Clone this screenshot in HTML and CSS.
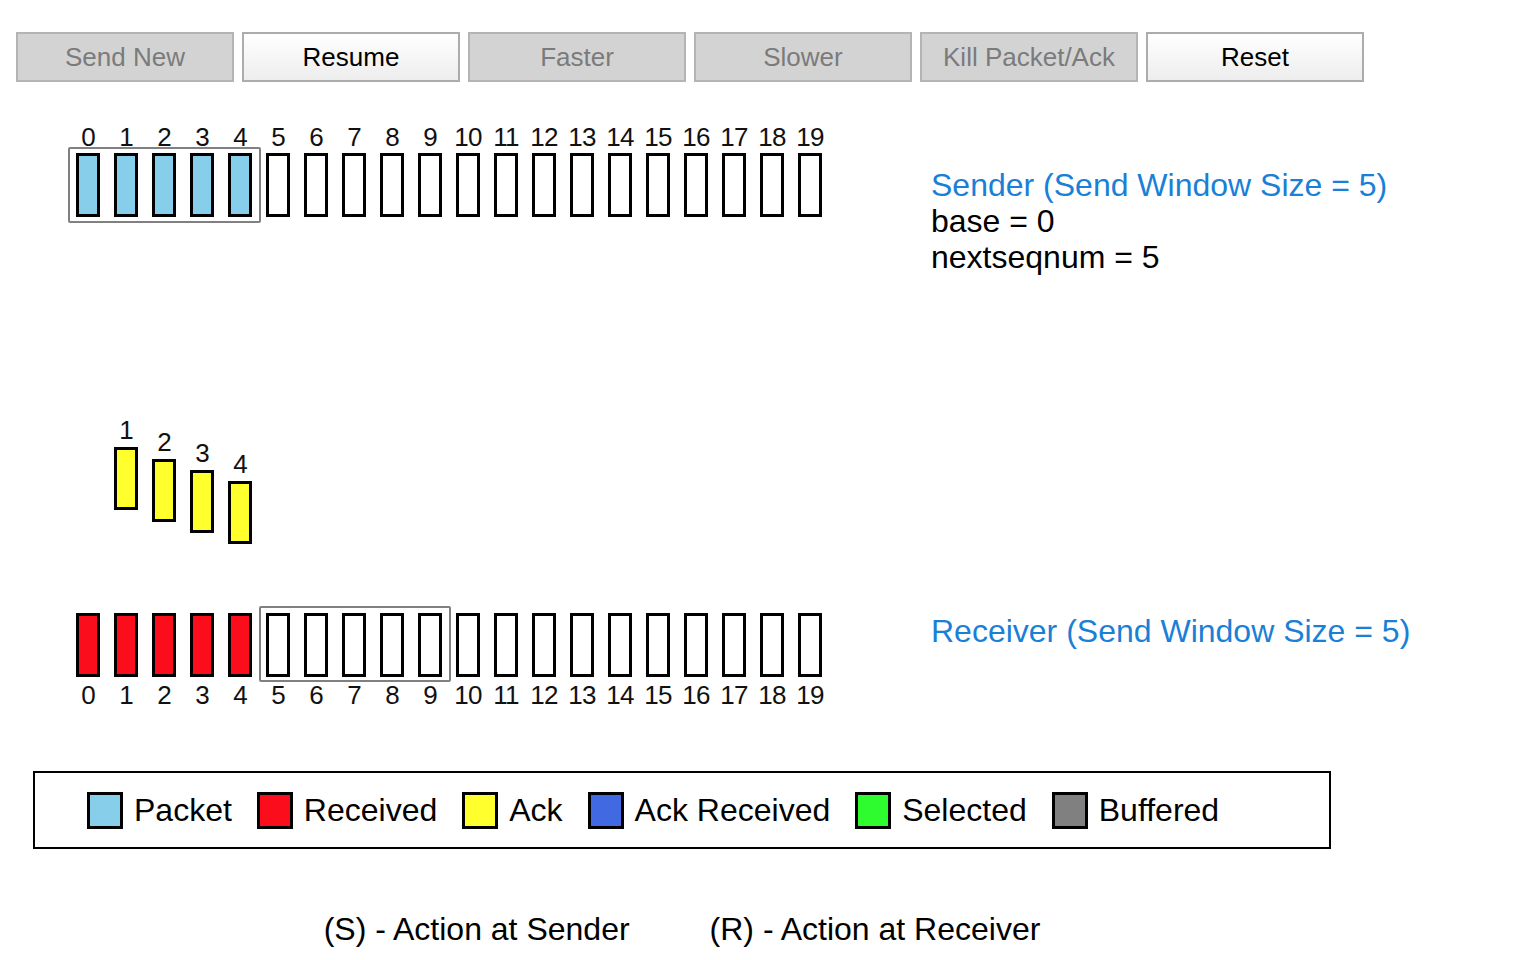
FILE: index.html
```html
<!DOCTYPE html>
<html>
<head>
<meta charset="utf-8">
<title>Selective Repeat</title>
<link rel="stylesheet" href="styles.css">
</head>
<body>
<div class="toolbar">
  <button class="btn" disabled>Send New</button>
  <button class="btn active">Resume</button>
  <button class="btn" disabled>Faster</button>
  <button class="btn" disabled>Slower</button>
  <button class="btn" disabled>Kill Packet/Ack</button>
  <button class="btn active">Reset</button>
</div>

<div class="row sender-row">
  <div class="diagram">
    <div class="strip">
      <div class="window sender-window"></div>
      <div class="slot"><span class="num">0</span><span class="cell packet"></span></div>
      <div class="slot"><span class="num">1</span><span class="cell packet"></span></div>
      <div class="slot"><span class="num">2</span><span class="cell packet"></span></div>
      <div class="slot"><span class="num">3</span><span class="cell packet"></span></div>
      <div class="slot"><span class="num">4</span><span class="cell packet"></span></div>
      <div class="slot"><span class="num">5</span><span class="cell"></span></div>
      <div class="slot"><span class="num">6</span><span class="cell"></span></div>
      <div class="slot"><span class="num">7</span><span class="cell"></span></div>
      <div class="slot"><span class="num">8</span><span class="cell"></span></div>
      <div class="slot"><span class="num">9</span><span class="cell"></span></div>
      <div class="slot"><span class="num">10</span><span class="cell"></span></div>
      <div class="slot"><span class="num">11</span><span class="cell"></span></div>
      <div class="slot"><span class="num">12</span><span class="cell"></span></div>
      <div class="slot"><span class="num">13</span><span class="cell"></span></div>
      <div class="slot"><span class="num">14</span><span class="cell"></span></div>
      <div class="slot"><span class="num">15</span><span class="cell"></span></div>
      <div class="slot"><span class="num">16</span><span class="cell"></span></div>
      <div class="slot"><span class="num">17</span><span class="cell"></span></div>
      <div class="slot"><span class="num">18</span><span class="cell"></span></div>
      <div class="slot"><span class="num">19</span><span class="cell"></span></div>
    </div>
  </div>
  <div class="info sender-info">
    <div class="title">Sender (Send Window Size = 5)</div>
    <div>base = 0</div>
    <div>nextseqnum = 5</div>
  </div>
</div>

<div class="channel">
  <div class="ack ack1"><span class="num">1</span><span class="cell ack-cell"></span></div>
  <div class="ack ack2"><span class="num">2</span><span class="cell ack-cell"></span></div>
  <div class="ack ack3"><span class="num">3</span><span class="cell ack-cell"></span></div>
  <div class="ack ack4"><span class="num">4</span><span class="cell ack-cell"></span></div>
</div>

<div class="row receiver-row">
  <div class="diagram">
    <div class="strip">
      <div class="window receiver-window"></div>
      <div class="slot"><span class="cell received"></span><span class="num">0</span></div>
      <div class="slot"><span class="cell received"></span><span class="num">1</span></div>
      <div class="slot"><span class="cell received"></span><span class="num">2</span></div>
      <div class="slot"><span class="cell received"></span><span class="num">3</span></div>
      <div class="slot"><span class="cell received"></span><span class="num">4</span></div>
      <div class="slot"><span class="cell"></span><span class="num">5</span></div>
      <div class="slot"><span class="cell"></span><span class="num">6</span></div>
      <div class="slot"><span class="cell"></span><span class="num">7</span></div>
      <div class="slot"><span class="cell"></span><span class="num">8</span></div>
      <div class="slot"><span class="cell"></span><span class="num">9</span></div>
      <div class="slot"><span class="cell"></span><span class="num">10</span></div>
      <div class="slot"><span class="cell"></span><span class="num">11</span></div>
      <div class="slot"><span class="cell"></span><span class="num">12</span></div>
      <div class="slot"><span class="cell"></span><span class="num">13</span></div>
      <div class="slot"><span class="cell"></span><span class="num">14</span></div>
      <div class="slot"><span class="cell"></span><span class="num">15</span></div>
      <div class="slot"><span class="cell"></span><span class="num">16</span></div>
      <div class="slot"><span class="cell"></span><span class="num">17</span></div>
      <div class="slot"><span class="cell"></span><span class="num">18</span></div>
      <div class="slot"><span class="cell"></span><span class="num">19</span></div>
    </div>
  </div>
  <div class="info receiver-info">
    <div class="title">Receiver (Send Window Size = 5)</div>
  </div>
</div>

<div class="legend">
  <div class="item"><span class="swatch packet"></span><span>Packet</span></div>
  <div class="item"><span class="swatch received"></span><span>Received</span></div>
  <div class="item"><span class="swatch ack-cell"></span><span>Ack</span></div>
  <div class="item"><span class="swatch ack-received"></span><span>Ack Received</span></div>
  <div class="item"><span class="swatch selected"></span><span>Selected</span></div>
  <div class="item"><span class="swatch buffered"></span><span>Buffered</span></div>
</div>

<div class="notes">
  <span>(S) - Action at Sender</span>
  <span>(R) - Action at Receiver</span>
</div>
</body>
</html>
```

FILE: styles.css
```css
html, body {
  margin: 0;
  padding: 0;
  background: #ffffff;
}

body {
  font-family: "Liberation Sans", Arial, sans-serif;
  color: #000;
  width: 1538px;
}

.toolbar {
  display: flex;
  gap: 8px;
  padding: 32px 0 0 16px;
}

.btn {
  box-sizing: border-box;
  width: 218px;
  height: 50px;
  margin: 0;
  padding: 0;
  font-family: "Liberation Sans", Arial, sans-serif;
  font-size: 26px;
  color: #7b7b7b;
  background: #d3d3d3;
  border: 2px solid #b4b4b4;
  border-radius: 0;
}

.btn.active {
  color: #000;
  background: linear-gradient(#ffffff, #ededed);
  border-color: #acacac;
}

.row {
  display: flex;
  align-items: flex-start;
}

.diagram {
  width: 931px;
  flex: none;
}

.strip {
  position: relative;
  display: flex;
  gap: 14px;
  margin-left: 76px;
}

.slot {
  display: flex;
  flex-direction: column;
  align-items: center;
  width: 24px;
}

.num {
  display: block;
  font-size: 26px;
  line-height: 24px;
  height: 24px;
  color: #111;
  white-space: nowrap;
  letter-spacing: -0.8px;
}

.cell {
  display: block;
  box-sizing: border-box;
  width: 24px;
  height: 64px;
  border: 3px solid #000;
  background: #fff;
}

.sender-row {
  margin-top: 43px;
}

.sender-row .num {
  margin-bottom: 4px;
}

.receiver-row .num {
  margin-top: 6px;
}

.window {
  position: absolute;
  box-sizing: border-box;
  border: 2px solid #808080;
  border-radius: 2px;
  pointer-events: none;
}

.sender-window {
  left: -8px;
  top: 22px;
  width: 193px;
  height: 76px;
}

.receiver-window {
  left: 183px;
  top: -7px;
  width: 192px;
  height: 76px;
}

.info {
  font-size: 32px;
  line-height: 36px;
}

.info .title {
  color: #1a7fd6;
}

.sender-info {
  margin-top: 42px;
}

.channel {
  position: relative;
  height: 338px;
}

.ack {
  position: absolute;
  display: flex;
  flex-direction: column;
  align-items: center;
  width: 24px;
  gap: 5px;
}

.ack .cell {
  height: 63px;
}

.ack1 { left: 114px; top: 143px; }
.ack2 { left: 152px; top: 155px; }
.ack3 { left: 190px; top: 166px; }
.ack4 { left: 228px; top: 177px; }

.packet { background: #87ceeb; }
.received { background: #fb0d1c; }
.ack-cell { background: #ffff2e; }
.ack-received { background: #4169e1; }
.selected { background: #2ffc2f; }
.buffered { background: #808080; }

.legend {
  box-sizing: border-box;
  display: flex;
  align-items: center;
  gap: 25px;
  margin: 64px 0 0 33px;
  width: 1298px;
  height: 78px;
  padding-left: 52px;
  border: 2px solid #000;
  font-size: 32px;
}

.item {
  display: flex;
  align-items: center;
  gap: 11px;
}

.swatch {
  display: block;
  box-sizing: border-box;
  width: 36px;
  height: 37px;
  border: 3px solid #000;
}

.notes {
  display: flex;
  justify-content: center;
  gap: 80px;
  margin: 62px 0 0 33px;
  width: 1298px;
  font-size: 32px;
  line-height: 36px;
}
```
